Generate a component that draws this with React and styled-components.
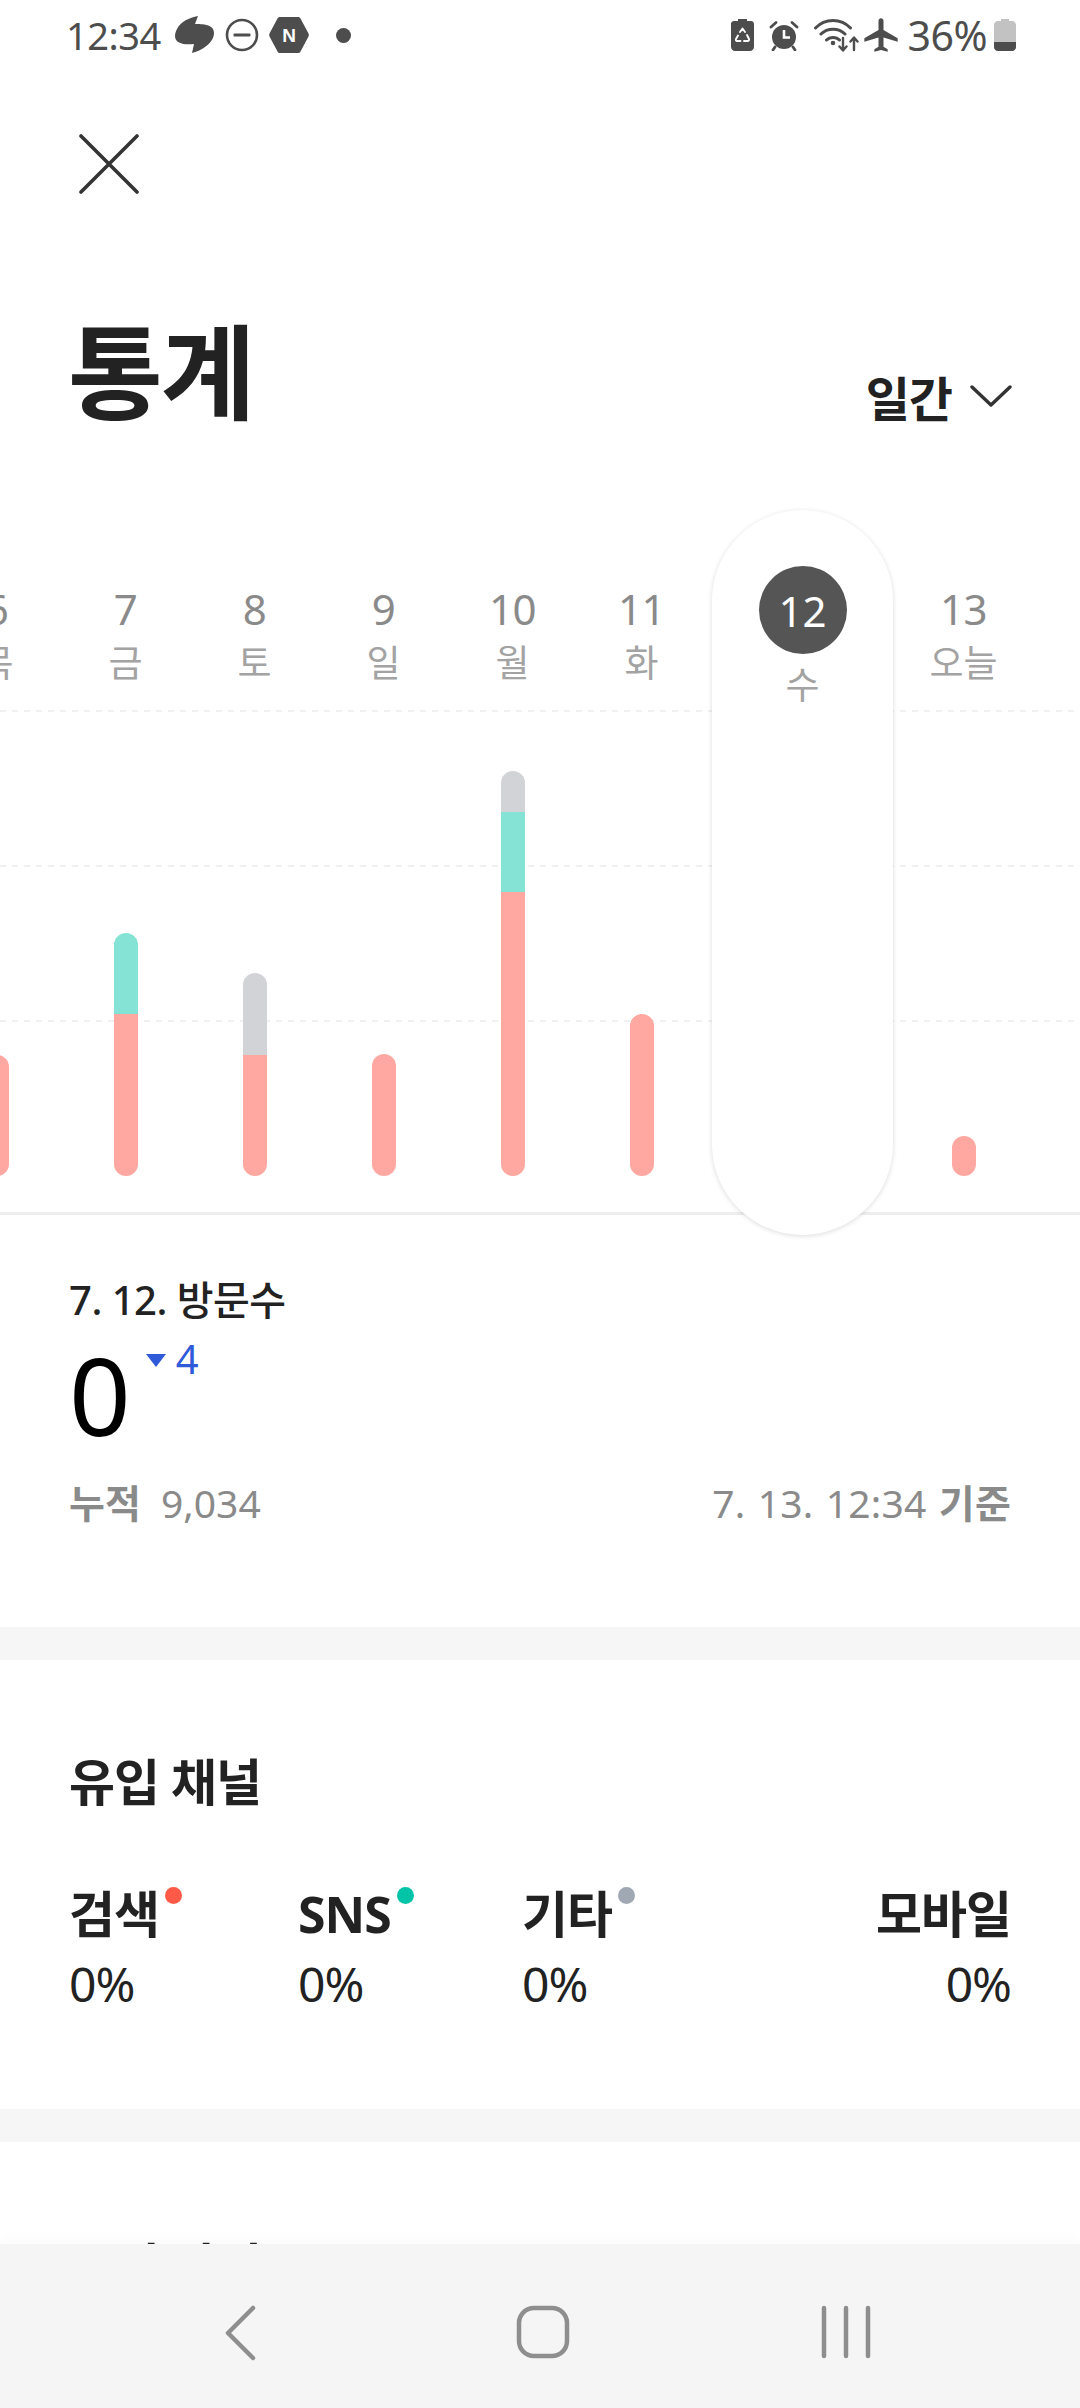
import styled, { createGlobalStyle } from 'styled-components';
import { MdAirplanemodeActive } from 'react-icons/md';

const GlobalStyle = createGlobalStyle`
  html, body {
    margin: 0;
    padding: 0;
    background: #fff;
  }
  * {
    box-sizing: border-box;
  }
`;

const FONT = `"Noto Sans", "Noto Sans CJK KR", sans-serif`;

const Page = styled.div`
  position: relative;
  width: 1080px;
  height: 2408px;
  overflow: hidden;
  background: #fff;
  font-family: ${FONT};
  color: #222;
`;

const StatusBar = styled.div`
  display: flex;
  justify-content: space-between;
  align-items: center;
  height: 70px;
  padding: 0 64px 0 66px;
  color: #4d4d4d;
`;

const StatusGroup = styled.div`
  display: flex;
  align-items: center;
`;

const StatusText = styled.span`
  margin-left: ${({ $gap }) => $gap || 0}px;
  font-size: ${({ $size }) => $size || 38}px;
  line-height: 70px;
  letter-spacing: -0.5px;
`;

const StatusIcon = styled.svg`
  display: block;
  flex: none;
  margin-left: ${({ $gap }) => $gap || 0}px;
  fill: #4d4d4d;
`;

const CloseButton = styled.button`
  display: block;
  margin: 64px 0 0 79px;
  padding: 0;
  width: 60px;
  height: 60px;
  border: none;
  background: transparent;
`;

const TitleRow = styled.div`
  display: flex;
  justify-content: space-between;
  align-items: flex-end;
  height: 130px;
  margin-top: 113px;
  padding: 0 68px 0 68px;
`;

const Title = styled.h1`
  margin: 0;
  font-size: 103px;
  line-height: 130px;
  font-weight: 700;
  letter-spacing: -2px;
  color: #222;
`;

const PeriodSelect = styled.div`
  display: flex;
  align-items: center;
  gap: 18px;
  height: 70px;
  margin-bottom: 6px;
  font-size: 48px;
  font-weight: 700;
  letter-spacing: -1px;
`;

const Chart = styled.section`
  position: relative;
  height: 705px;
  margin-top: 73px;
  border-bottom: 3px solid #eeeeef;
`;

const GridLines = styled.div`
  position: absolute;
  inset: 200px 0 auto 0;
  display: flex;
  flex-direction: column;
  gap: 153px;
`;

const GridLine = styled.div`
  height: 2px;
  background: repeating-linear-gradient(to right, #f0f0f0 0 6px, transparent 6px 12px);
`;

const DayRow = styled.div`
  position: relative;
  display: flex;
  height: 100%;
  margin-left: -68px;
`;

const DayColumn = styled.div`
  position: relative;
  display: flex;
  flex: none;
  flex-direction: column;
  align-items: center;
  width: ${({ $selected }) => ($selected ? 193 : 129)}px;
  padding-top: ${({ $selected }) => ($selected ? 56 : 74)}px;
  padding-bottom: 36px;
`;

const Pill = styled.div`
  position: absolute;
  top: 0;
  bottom: -23px;
  left: 6px;
  right: 6px;
  border-radius: 91px;
  background: #fff;
  box-shadow: 0 1px 5px rgba(0, 0, 0, 0.14);
`;

const DayNumber = styled.div`
  position: relative;
  font-size: 42px;
  line-height: 50px;
  letter-spacing: -0.5px;
  color: #8a8a8a;
`;

const SelectedNumber = styled.div`
  position: relative;
  display: flex;
  align-items: center;
  justify-content: center;
  width: 88px;
  height: 88px;
  border-radius: 50%;
  background: #555;
  font-size: 42px;
  color: #fff;
`;

const DayName = styled.div`
  position: relative;
  margin-top: ${({ $selected }) => ($selected ? 6 : 4)}px;
  font-size: 37px;
  line-height: 50px;
  color: #a3a3a3;
`;

const Bar = styled.div`
  position: relative;
  display: flex;
  flex-direction: column;
  width: 24px;
  margin-top: auto;
  border-radius: 12px;
  overflow: hidden;
`;

const BarPart = styled.div`
  background: ${({ $color }) => $color};
`;

const VisitSection = styled.section`
  padding: 60px 69px 0 69px;
  height: 412px;
`;

const VisitTitle = styled.div`
  font-size: 40px;
  line-height: 50px;
  font-weight: 500;
  letter-spacing: -0.5px;
  color: #222;
`;

const VisitCount = styled.div`
  display: flex;
  align-items: flex-start;
  height: 122px;
  margin-top: 9px;
`;

const CountNumber = styled.span`
  font-size: 108px;
  line-height: 122px;
  color: #000;
`;

const DeltaArrow = styled.span`
  width: 0;
  height: 0;
  margin: 20px 0 0 15px;
  border-left: 10px solid transparent;
  border-right: 10px solid transparent;
  border-top: 13px solid #2f5bd8;
`;

const DeltaValue = styled.span`
  margin: 0 0 0 10px;
  font-size: 40px;
  line-height: 50px;
  color: #2f5bd8;
`;

const VisitFooter = styled.div`
  display: flex;
  justify-content: space-between;
  margin-top: 22px;
  font-size: 39px;
  line-height: 50px;
  color: #8a8a8a;
`;

const BaseTime = styled.span`
  word-spacing: 2px;
  letter-spacing: 0.2px;
`;

const Strong = styled.span`
  font-weight: 700;
`;

const SectionGap = styled.div`
  height: 33px;
  background: #f6f6f6;
`;

const ChannelSection = styled.section`
  height: 449px;
  padding: 92px 69px 0 69px;
`;

const SectionTitle = styled.h2`
  margin: 0;
  font-size: 50px;
  line-height: 60px;
  font-weight: 700;
  letter-spacing: -1px;
  color: #222;
`;

const ChannelGrid = styled.div`
  display: grid;
  grid-template-columns: 229px 224px 1fr 1fr;
  margin-top: 72px;
`;

const Channel = styled.div`
  display: flex;
  flex-direction: column;
  align-items: ${({ $right }) => ($right ? 'flex-end' : 'flex-start')};
`;

const ChannelName = styled.div`
  position: relative;
  font-size: 50px;
  line-height: 60px;
  font-weight: 700;
  letter-spacing: -1px;
  color: #222;
`;

const ChannelDot = styled.span`
  position: absolute;
  top: 3px;
  right: -23px;
  width: 17px;
  height: 17px;
  border-radius: 50%;
  background: ${({ $color }) => $color};
`;

const ChannelValue = styled.div`
  margin-top: 10px;
  font-size: 48px;
  line-height: 60px;
  color: #222;
  letter-spacing: -1px;
`;

const NextSection = styled.section`
  padding: 94px 69px 0;
`;

const NavBar = styled.nav`
  position: absolute;
  left: 0;
  right: 0;
  bottom: 0;
  display: flex;
  justify-content: center;
  align-items: flex-start;
  height: 164px;
  padding: 61px 0 0 6px;
  background: #f5f5f5;
  box-shadow: 0 -6px 12px rgba(0, 0, 0, 0.02);
`;

const NavSlot = styled.div`
  display: flex;
  justify-content: center;
  width: 303px;
`;

const PlaneWrap = styled.span`
  display: flex;
  margin-left: 2px;
  color: #4d4d4d;
  font-size: 40px;
`;

const days = [
  { num: 6, name: '목', parts: [{ c: '#ffa8a1', h: 121 }] },
  { num: 7, name: '금', parts: [{ c: '#84e3d5', h: 81 }, { c: '#ffa8a1', h: 162 }] },
  { num: 8, name: '토', parts: [{ c: '#d2d3d6', h: 82 }, { c: '#ffa8a1', h: 121 }] },
  { num: 9, name: '일', parts: [{ c: '#ffa8a1', h: 122 }] },
  { num: 10, name: '월', parts: [{ c: '#d2d3d6', h: 41 }, { c: '#84e3d5', h: 80 }, { c: '#ffa8a1', h: 284 }] },
  { num: 11, name: '화', parts: [{ c: '#ffa8a1', h: 162 }] },
  { num: 12, name: '수', selected: true, parts: [] },
  { num: 13, name: '오늘', parts: [{ c: '#ffa8a1', h: 40 }] },
];

const channels = [
  { name: '검색', dot: '#ff5a47' },
  { name: 'SNS', dot: '#00c4a8' },
  { name: '기타', dot: '#a0a8b4' },
  { name: '모바일', right: true },
];

function LeftStatusIcons() {
  return (
    <>
      <StatusIcon $gap={14} width="40" height="38" viewBox="0 0 40 38">
        <path d="M23 0 L20 8 C27 8 39 8 39 17 C39 27 26 35 17 37 L19 28 C10 29 0 28 0 20 C0 17 1 15 2 13 C6 5 14 2 23 0 Z" />
      </StatusIcon>
      <StatusIcon $gap={10} width="34" height="34" viewBox="0 0 34 34">
        <circle cx="17" cy="17" r="15" fill="none" stroke="#4d4d4d" strokeWidth="2.6" />
        <rect x="8.5" y="15.6" width="17" height="2.8" rx="1" />
      </StatusIcon>
      <StatusIcon $gap={10} width="40" height="36" viewBox="0 0 40 36">
        <path d="M11 0 H29 C30 0 31 .5 31.5 1.5 L39.5 16.5 C40 17.5 40 18.5 39.5 19.5 L31.5 34.5 C31 35.5 30 36 29 36 H11 C10 36 9 35.5 8.5 34.5 L.5 19.5 C0 18.5 0 17.5 .5 16.5 L8.5 1.5 C9 .5 10 0 11 0 Z" />
        <text x="20" y="24.5" textAnchor="middle" fontSize="19" fontWeight="900" fill="#fff" fontFamily="Liberation Sans, sans-serif">N</text>
      </StatusIcon>
      <StatusIcon $gap={27} width="15" height="15" viewBox="0 0 15 15">
        <circle cx="7.5" cy="7.5" r="7.5" />
      </StatusIcon>
    </>
  );
}

function RightStatusIcons() {
  return (
    <>
      <StatusIcon width="23" height="32" viewBox="0 0 23 32">
        <path d="M7 0 H16 V2 H20 C21.7 2 23 3.3 23 5 V28 C23 30.2 21.2 32 19 32 H4 C1.8 32 0 30.2 0 28 V5 C0 3.3 1.3 2 3 2 H7 Z" />
        <path d="M9 13 L11.5 9.5 L14 13 M16 16 L18 20 C18.3 21 17.8 22 17 22 H13 M9.5 22 H6 C5 22 4.6 21 5 20 L7 16.5" fill="none" stroke="#fff" strokeWidth="1.9" strokeLinecap="round" strokeLinejoin="round" />
      </StatusIcon>
      <StatusIcon $gap={15} width="30" height="31" viewBox="0 0 30 31">
        <circle cx="15" cy="17" r="12" />
        <path d="M2 7 L7 2.5 M28 7 L23 2.5 M6 27 L4 30 M24 27 L26 30" stroke="#4d4d4d" strokeWidth="2.8" strokeLinecap="round" />
        <path d="M15 10 V17.5 H21" fill="none" stroke="#fff" strokeWidth="2.6" />
      </StatusIcon>
      <StatusIcon $gap={15} width="45" height="36" viewBox="0 0 45 36">
        <path d="M1.5 11 C11 1 27 1 36.5 11 M7 17 C13.5 10.5 24.5 10.5 31 17 M12.5 23 C16 19.5 22 19.5 25.5 23" fill="none" stroke="#4d4d4d" strokeWidth="3" strokeLinecap="round" />
        <circle cx="19" cy="26" r="2.3" />
        <path d="M29 21 V33 M25.5 29.5 L29 33.5 L32.5 29.5 M40 33 V21 M36.5 24.5 L40 20.5 L43.5 24.5" fill="none" stroke="#4d4d4d" strokeWidth="2.4" strokeLinecap="round" strokeLinejoin="round" />
      </StatusIcon>
      <PlaneWrap>
        <MdAirplanemodeActive />
      </PlaneWrap>
      <StatusText $gap={7} $size={41}>36%</StatusText>
      <StatusIcon $gap={7} width="22" height="32" viewBox="0 0 22 32">
        <path d="M7 0 H15 V2 H18 C20.2 2 22 3.8 22 6 V28 C22 30.2 20.2 32 18 32 H4 C1.8 32 0 30.2 0 28 V6 C0 3.8 1.8 2 4 2 H7 Z" fill="#c2c2c2" />
        <path d="M0 23 H22 V28 C22 30.2 20.2 32 18 32 H4 C1.8 32 0 30.2 0 28 Z" />
      </StatusIcon>
    </>
  );
}

export default function App() {
  return (
    <Page>
      <GlobalStyle />
      <StatusBar>
        <StatusGroup>
          <StatusText>12:34</StatusText>
          <LeftStatusIcons />
        </StatusGroup>
        <StatusGroup>
          <RightStatusIcons />
        </StatusGroup>
      </StatusBar>

      <CloseButton aria-label="닫기">
        <svg width="60" height="60" viewBox="0 0 60 60">
          <path d="M2 2 L58 58 M58 2 L2 58" stroke="#333" strokeWidth="3.6" strokeLinecap="round" />
        </svg>
      </CloseButton>

      <TitleRow>
        <Title>통계</Title>
        <PeriodSelect>
          일간
          <svg width="42" height="22" viewBox="0 0 42 22">
            <path d="M2 2 L21 20 L40 2" fill="none" stroke="#333" strokeWidth="3.4" strokeLinecap="round" strokeLinejoin="round" />
          </svg>
        </PeriodSelect>
      </TitleRow>

      <Chart>
        <GridLines>
          <GridLine />
          <GridLine />
          <GridLine />
        </GridLines>
        <DayRow>
          {days.map((day) => (
            <DayColumn key={day.num} $selected={day.selected}>
              {day.selected && <Pill />}
              {day.selected ? (
                <SelectedNumber>{day.num}</SelectedNumber>
              ) : (
                <DayNumber>{day.num}</DayNumber>
              )}
              <DayName $selected={day.selected}>{day.name}</DayName>
              <Bar>
                {day.parts.map((part, i) => (
                  <BarPart key={i} $color={part.c} style={{ height: part.h }} />
                ))}
              </Bar>
            </DayColumn>
          ))}
        </DayRow>
      </Chart>

      <VisitSection>
        <VisitTitle>7. 12. 방문수</VisitTitle>
        <VisitCount>
          <CountNumber>0</CountNumber>
          <DeltaArrow />
          <DeltaValue>4</DeltaValue>
        </VisitCount>
        <VisitFooter>
          <span><Strong>누적</Strong>&nbsp; 9,034</span>
          <BaseTime>7. 13. 12:34 <Strong>기준</Strong></BaseTime>
        </VisitFooter>
      </VisitSection>

      <SectionGap />

      <ChannelSection>
        <SectionTitle>유입 채널</SectionTitle>
        <ChannelGrid>
          {channels.map((channel) => (
            <Channel key={channel.name} $right={channel.right}>
              <ChannelName>
                {channel.name}
                {channel.dot && <ChannelDot $color={channel.dot} />}
              </ChannelName>
              <ChannelValue>0%</ChannelValue>
            </Channel>
          ))}
        </ChannelGrid>
      </ChannelSection>

      <SectionGap />

      <NextSection>
        <SectionTitle>유입 상위</SectionTitle>
      </NextSection>

      <NavBar>
        <NavSlot>
          <svg width="32" height="56" viewBox="0 0 32 56">
            <path d="M29 3 L4 28 L29 53" fill="none" stroke="#8e8e8e" strokeWidth="4.5" strokeLinecap="round" strokeLinejoin="round" />
          </svg>
        </NavSlot>
        <NavSlot>
          <svg width="54" height="54" viewBox="0 0 54 54">
            <rect x="3" y="3" width="48" height="48" rx="15" fill="none" stroke="#8e8e8e" strokeWidth="4.5" />
          </svg>
        </NavSlot>
        <NavSlot>
          <svg width="50" height="54" viewBox="0 0 50 54">
            <path d="M3 3 V51 M25 3 V51 M47 3 V51" stroke="#8e8e8e" strokeWidth="4.5" strokeLinecap="round" />
          </svg>
        </NavSlot>
      </NavBar>
    </Page>
  );
}
